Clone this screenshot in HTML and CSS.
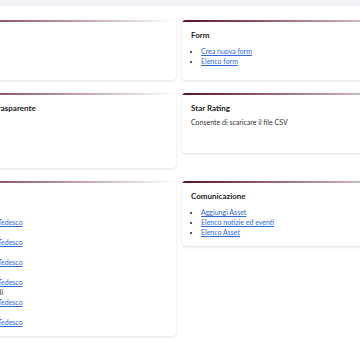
FILE: index.html
```html
<!DOCTYPE html>
<html lang="it">
<head>
<meta charset="utf-8">
<title>Dashboard</title>
<link rel="stylesheet" href="styles.css">
</head>
<body>
<div class="viewport">
  <div class="topbar"></div>
  <main class="main">
    <div class="grid">
      <section class="card">
        <h3 class="card-title">Modulistica</h3>
      </section>
      <section class="card">
        <h3 class="card-title">Form</h3>
        <ul class="list">
          <li><a href="#">Crea nuova form</a></li>
          <li><a href="#">Elenco form</a></li>
        </ul>
      </section>

      <section class="card">
        <h3 class="card-title">Amministrazione Trasparente</h3>
        <ul class="list plain">
          <li>Atti</li>
          <li>Bandi</li>
          <li>Avvisi</li>
          <li>Esiti</li>
        </ul>
      </section>
      <section class="card">
        <h3 class="card-title">Star Rating</h3>
        <p class="desc">Consente di scaricare il file CSV</p>
      </section>

      <section class="card">
        <h3 class="card-title">Lingue</h3>
        <ul class="list plain">
          <li>Italiano</li>
          <li><a href="#">Versione in lingua Tedesco</a></li>
          <li>Inglese</li>
          <li><a href="#">Versione in lingua Tedesco</a></li>
          <li>Francese</li>
          <li><a href="#">Versione in lingua Tedesco</a></li>
          <li>Spagnolo</li>
          <li><a href="#">Versione in lingua Tedesco</a></li>
          <li>Versioni consultabili</li>
          <li><a href="#">Versione in lingua Tedesco</a></li>
          <li>Ladino</li>
          <li><a href="#">Versione in lingua Tedesco</a></li>
        </ul>
      </section>
      <section class="card">
        <h3 class="card-title">Comunicazione</h3>
        <ul class="list">
          <li><a href="#">Aggiungi Asset</a></li>
          <li><a href="#">Elenco notizie ed eventi</a></li>
          <li><a href="#">Elenco Asset</a></li>
        </ul>
      </section>
    </div>
  </main>
</div>
</body>
</html>
```
FILE: styles.css
```css
html, body {
  margin: 0;
  padding: 0;
  background: #ffffff;
}

body {
  font-family: Lato, "Liberation Sans", sans-serif;
  color: #222222;
}

.viewport {
  width: 360px;
  height: 360px;
  overflow: hidden;
}

.topbar {
  height: 6px;
  background: #f1f2f7;
}

.main {
  padding-top: 14px;
}

.grid {
  display: grid;
  grid-template-columns: 253px 253px;
  column-gap: 6px;
  row-gap: 13px;
  align-items: start;
  margin-left: -77px;
}

.card {
  box-sizing: border-box;
  min-height: 60px;
  padding: 9px;
  border-radius: 4px;
  background: linear-gradient(to right, #5a0d2d 0%, #ffffff 100%) top left / 100% 2px no-repeat, #ffffff;
  box-shadow: 0 1px 3px rgba(0, 0, 0, 0.13);
}

.card-title {
  margin: 0;
  font-size: 8px;
  line-height: 12px;
  font-weight: 700;
  color: #222222;
  white-space: nowrap;
}

.list {
  margin: 5px 0 0 0;
  padding: 0 0 0 10px;
  list-style: disc;
  font-size: 7px;
  line-height: 10px;
  white-space: nowrap;
}

.list.plain {
  list-style: none;
}

.list a {
  color: #2f68d8;
  text-decoration: underline;
}

.desc {
  margin: 3px 0 0 0;
  font-size: 7px;
  line-height: 10px;
  color: #333333;
}
```
